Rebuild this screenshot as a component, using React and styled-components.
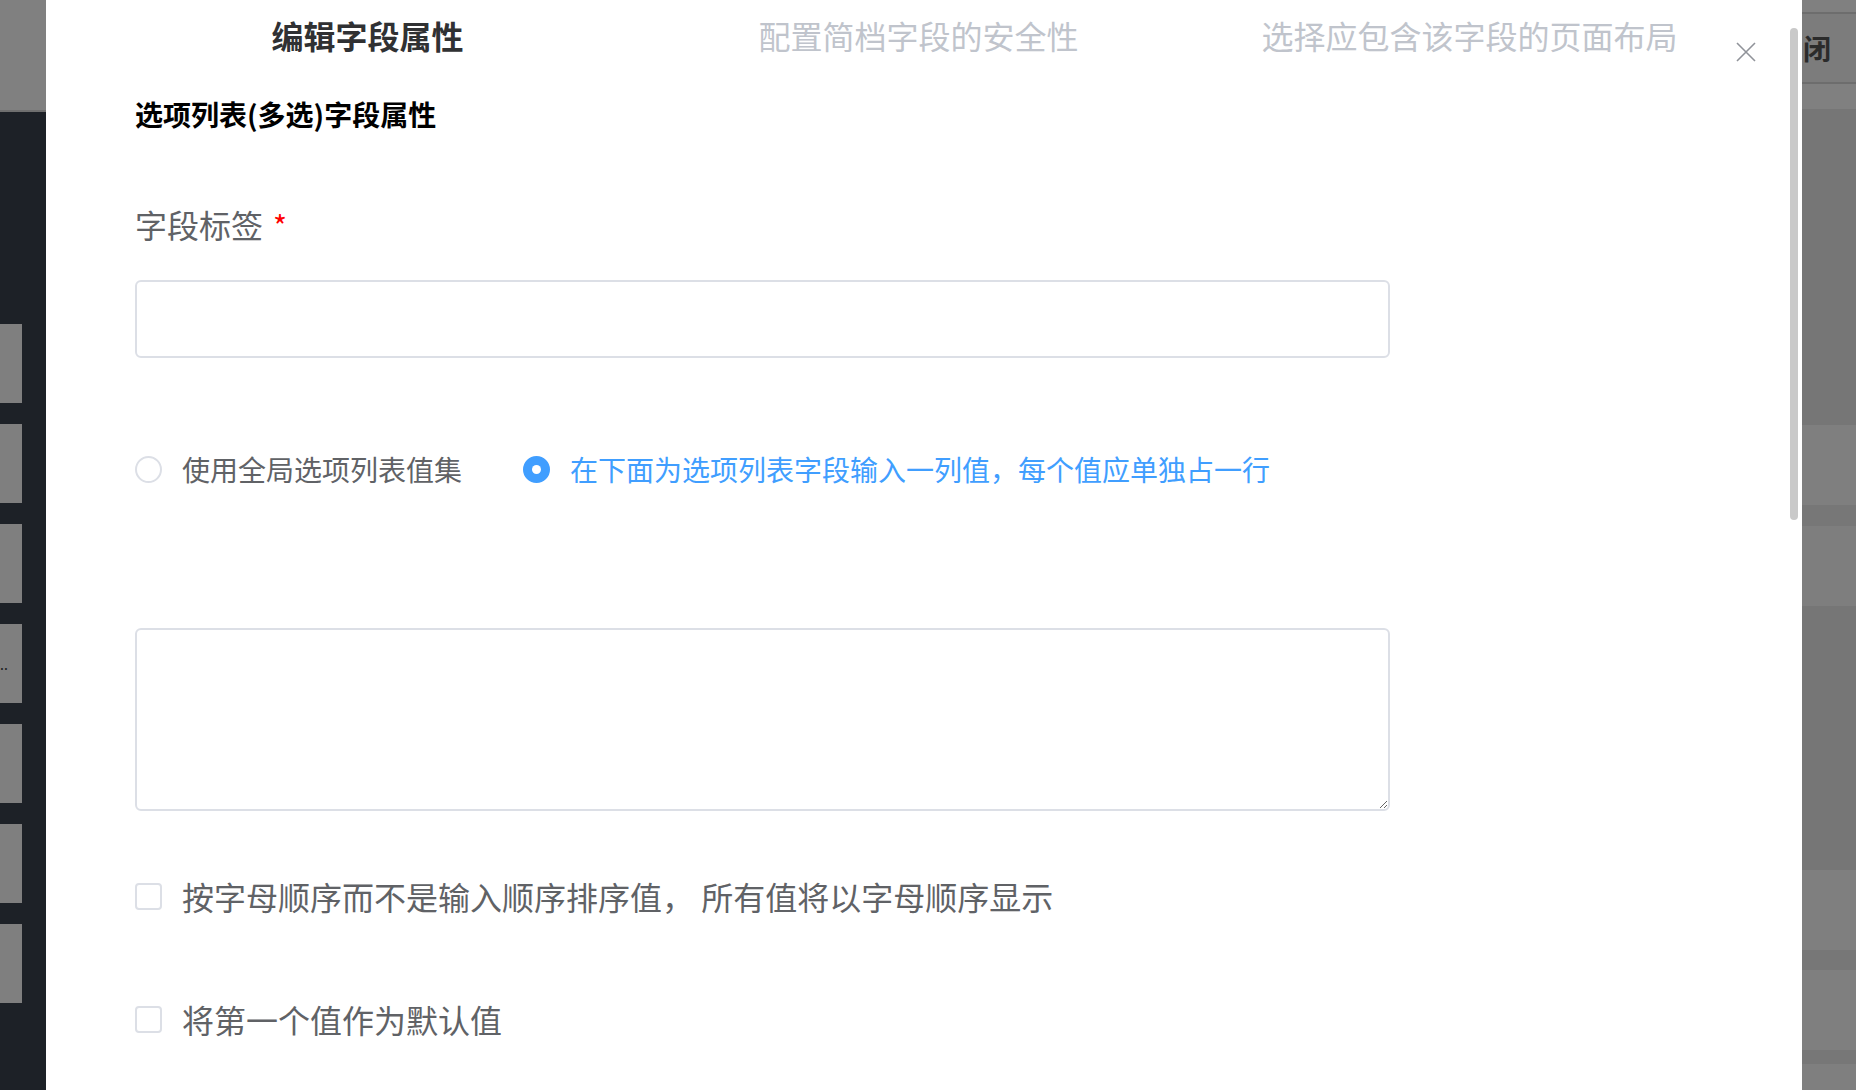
import styled, { createGlobalStyle } from 'styled-components';

const GlobalStyle = createGlobalStyle`
  html, body {
    margin: 0;
    height: 100%;
    overflow: hidden;
  }
  body {
    font-family: "Noto Sans CJK SC", "Noto Sans", sans-serif;
    background: #808080;
  }
  * {
    box-sizing: border-box;
  }
`;

const Page = styled.div`
  display: flex;
  height: 100vh;
  overflow: hidden;
`;

/* left side: the page behind the dialog, dimmed by the mask */
const LeftStrip = styled.div`
  width: 46px;
  flex-shrink: 0;
  display: flex;
  flex-direction: column;
  background: #1d2127;
`;

const TopBar = styled.div`
  height: 112px;
  background: #808080;
  border-bottom: 2px solid #6f6f6f;
`;

const SideList = styled.div`
  display: flex;
  flex-direction: column;
  gap: 21px;
  padding-top: 212px;
`;

const SideItem = styled.div`
  width: 22px;
  height: 79px;
  background: #7f7f7f;
  display: flex;
  align-items: center;
  overflow: hidden;
  font-size: 14px;
  line-height: 1;
  color: #1a1a1a;
`;

const RightStrip = styled.div`
  width: 54px;
  flex-shrink: 0;
  display: flex;
  flex-direction: column;
  background: #7f7f7f;
`;

const Band = styled.div`
  height: ${({ $h }) => $h}px;
  flex-shrink: 0;
  background: ${({ $c }) => $c};
  border-bottom: ${({ $line }) => ($line ? '2px solid #6d6d6d' : 'none')};
  display: flex;
  align-items: center;
  overflow: hidden;
`;

const CutText = styled.span`
  font-size: 28px;
  font-weight: 700;
  color: #2b2b2b;
  padding-left: 1px;
  white-space: nowrap;
`;

/* dialog */
const Dialog = styled.div`
  position: relative;
  width: 1756px;
  flex-shrink: 0;
  height: 100vh;
  background: #fff;
  overflow: hidden;
`;

const Header = styled.div`
  display: grid;
  grid-template-columns: repeat(3, 551px);
  padding: 13px 0 0 46px;
`;

const Tab = styled.div`
  text-align: center;
  font-size: 32px;
  line-height: 44px;
  font-weight: ${({ $active }) => ($active ? 700 : 400)};
  color: ${({ $active }) => ($active ? '#303133' : '#c0c4cc')};
  white-space: nowrap;
`;

const CloseButton = styled.button`
  position: absolute;
  top: 42px;
  right: 46px;
  width: 20px;
  height: 20px;
  padding: 0;
  border: none;
  background: none;
  cursor: pointer;
  display: flex;
`;

const ScrollThumb = styled.div`
  position: absolute;
  top: 28px;
  right: 4px;
  width: 8px;
  height: 492px;
  border-radius: 4px;
  background: #c9c9c9;
`;

const Body = styled.div`
  padding-left: 89px;
  display: flex;
  flex-direction: column;
  align-items: flex-start;
`;

const SectionTitle = styled.div`
  margin-top: 37px;
  font-size: 28px;
  line-height: 40px;
  font-weight: 700;
  color: #000;
`;

const FieldLabel = styled.label`
  margin-top: 68px;
  font-size: 32px;
  line-height: 44px;
  color: #606266;
`;

const Required = styled.span`
  margin-left: 10px;
  color: #f00;
  font-size: 30px;
`;

const TextInput = styled.input`
  margin-top: 33px;
  width: 1255px;
  height: 78px;
  border: 2px solid #dcdfe6;
  border-radius: 6px;
  padding: 0 20px;
  font-size: 28px;
  font-family: inherit;
  outline: none;
`;

const RadioGroup = styled.div`
  margin-top: 89px;
  display: flex;
  align-items: center;
  gap: 61px;
  height: 44px;
`;

const Choice = styled.label`
  display: flex;
  align-items: center;
  gap: 20px;
  font-size: ${({ $size }) => $size || 28}px;
  line-height: 44px;
  color: ${({ $checked }) => ($checked ? '#409eff' : '#606266')};
  cursor: pointer;
  white-space: nowrap;
`;

const RadioDot = styled.span`
  width: 27px;
  height: 27px;
  border-radius: 50%;
  flex-shrink: 0;
  border: 2px solid ${({ $checked }) => ($checked ? '#409eff' : '#dcdfe6')};
  background: ${({ $checked }) => ($checked ? '#409eff' : '#fff')};
  display: flex;
  align-items: center;
  justify-content: center;

  &::after {
    content: '';
    width: 9px;
    height: 9px;
    border-radius: 50%;
    background: #fff;
    display: ${({ $checked }) => ($checked ? 'block' : 'none')};
  }
`;

const CheckBox = styled.span`
  width: 27px;
  height: 27px;
  flex-shrink: 0;
  border: 2px solid #dcdfe6;
  border-radius: 4px;
  background: #fff;
`;

const ValuesArea = styled.textarea`
  margin-top: 137px;
  width: 1255px;
  height: 183px;
  border: 2px solid #dcdfe6;
  border-radius: 6px;
  padding: 10px 20px;
  font-size: 28px;
  font-family: inherit;
  resize: vertical;
  outline: none;
`;

const CheckRow = styled.div`
  margin-top: ${({ $gap }) => $gap}px;
  height: 44px;
  display: flex;
  align-items: center;
`;

const rightBands = [
  { h: 14, c: '#808080', line: true },
  { h: 70, c: '#7c7c7c', line: true, text: '闭' },
  { h: 25, c: '#808080' },
  { h: 316, c: '#767676' },
  { h: 80, c: '#7f7f7f' },
  { h: 21, c: '#777777' },
  { h: 80, c: '#7e7e7e' },
  { h: 264, c: '#767676' },
  { h: 80, c: '#7f7f7f' },
  { h: 20, c: '#777777' },
  { h: 80, c: '#7f7f7f' },
  { h: 14, c: '#777777' },
  { h: 40, c: '#7f7f7f' },
];

const tabs = ['编辑字段属性', '配置简档字段的安全性', '选择应包含该字段的页面布局'];

export default function App() {
  return (
    <>
      <GlobalStyle />
      <Page>
        <LeftStrip>
          <TopBar />
          <SideList>
            {[0, 1, 2, 3, 4, 5, 6].map((i) => (
              <SideItem key={i}>{i === 3 ? '..' : ''}</SideItem>
            ))}
          </SideList>
        </LeftStrip>

        <Dialog>
          <Header>
            {tabs.map((t, i) => (
              <Tab key={t} $active={i === 0}>{t}</Tab>
            ))}
          </Header>
          <CloseButton aria-label="关闭">
            <svg width="20" height="20" viewBox="0 0 20 20">
              <path d="M1 1 L19 19 M19 1 L1 19" stroke="#909399" strokeWidth="1.6" fill="none" />
            </svg>
          </CloseButton>

          <Body>
            <SectionTitle>选项列表(多选)字段属性</SectionTitle>
            <FieldLabel>
              字段标签<Required>*</Required>
            </FieldLabel>
            <TextInput type="text" />

            <RadioGroup>
              <Choice>
                <RadioDot />
                使用全局选项列表值集
              </Choice>
              <Choice $checked>
                <RadioDot $checked />
                在下面为选项列表字段输入一列值，每个值应单独占一行
              </Choice>
            </RadioGroup>

            <ValuesArea />

            <CheckRow $gap={63}>
              <Choice $size={32}>
                <CheckBox />
                按字母顺序而不是输入顺序排序值， 所有值将以字母顺序显示
              </Choice>
            </CheckRow>
            <CheckRow $gap={79}>
              <Choice $size={32}>
                <CheckBox />
                将第一个值作为默认值
              </Choice>
            </CheckRow>
          </Body>
          <ScrollThumb />
        </Dialog>

        <RightStrip>
          {rightBands.map((b, i) => (
            <Band key={i} $h={b.h} $c={b.c} $line={b.line}>
              {b.text && <CutText>{b.text}</CutText>}
            </Band>
          ))}
        </RightStrip>
      </Page>
    </>
  );
}
